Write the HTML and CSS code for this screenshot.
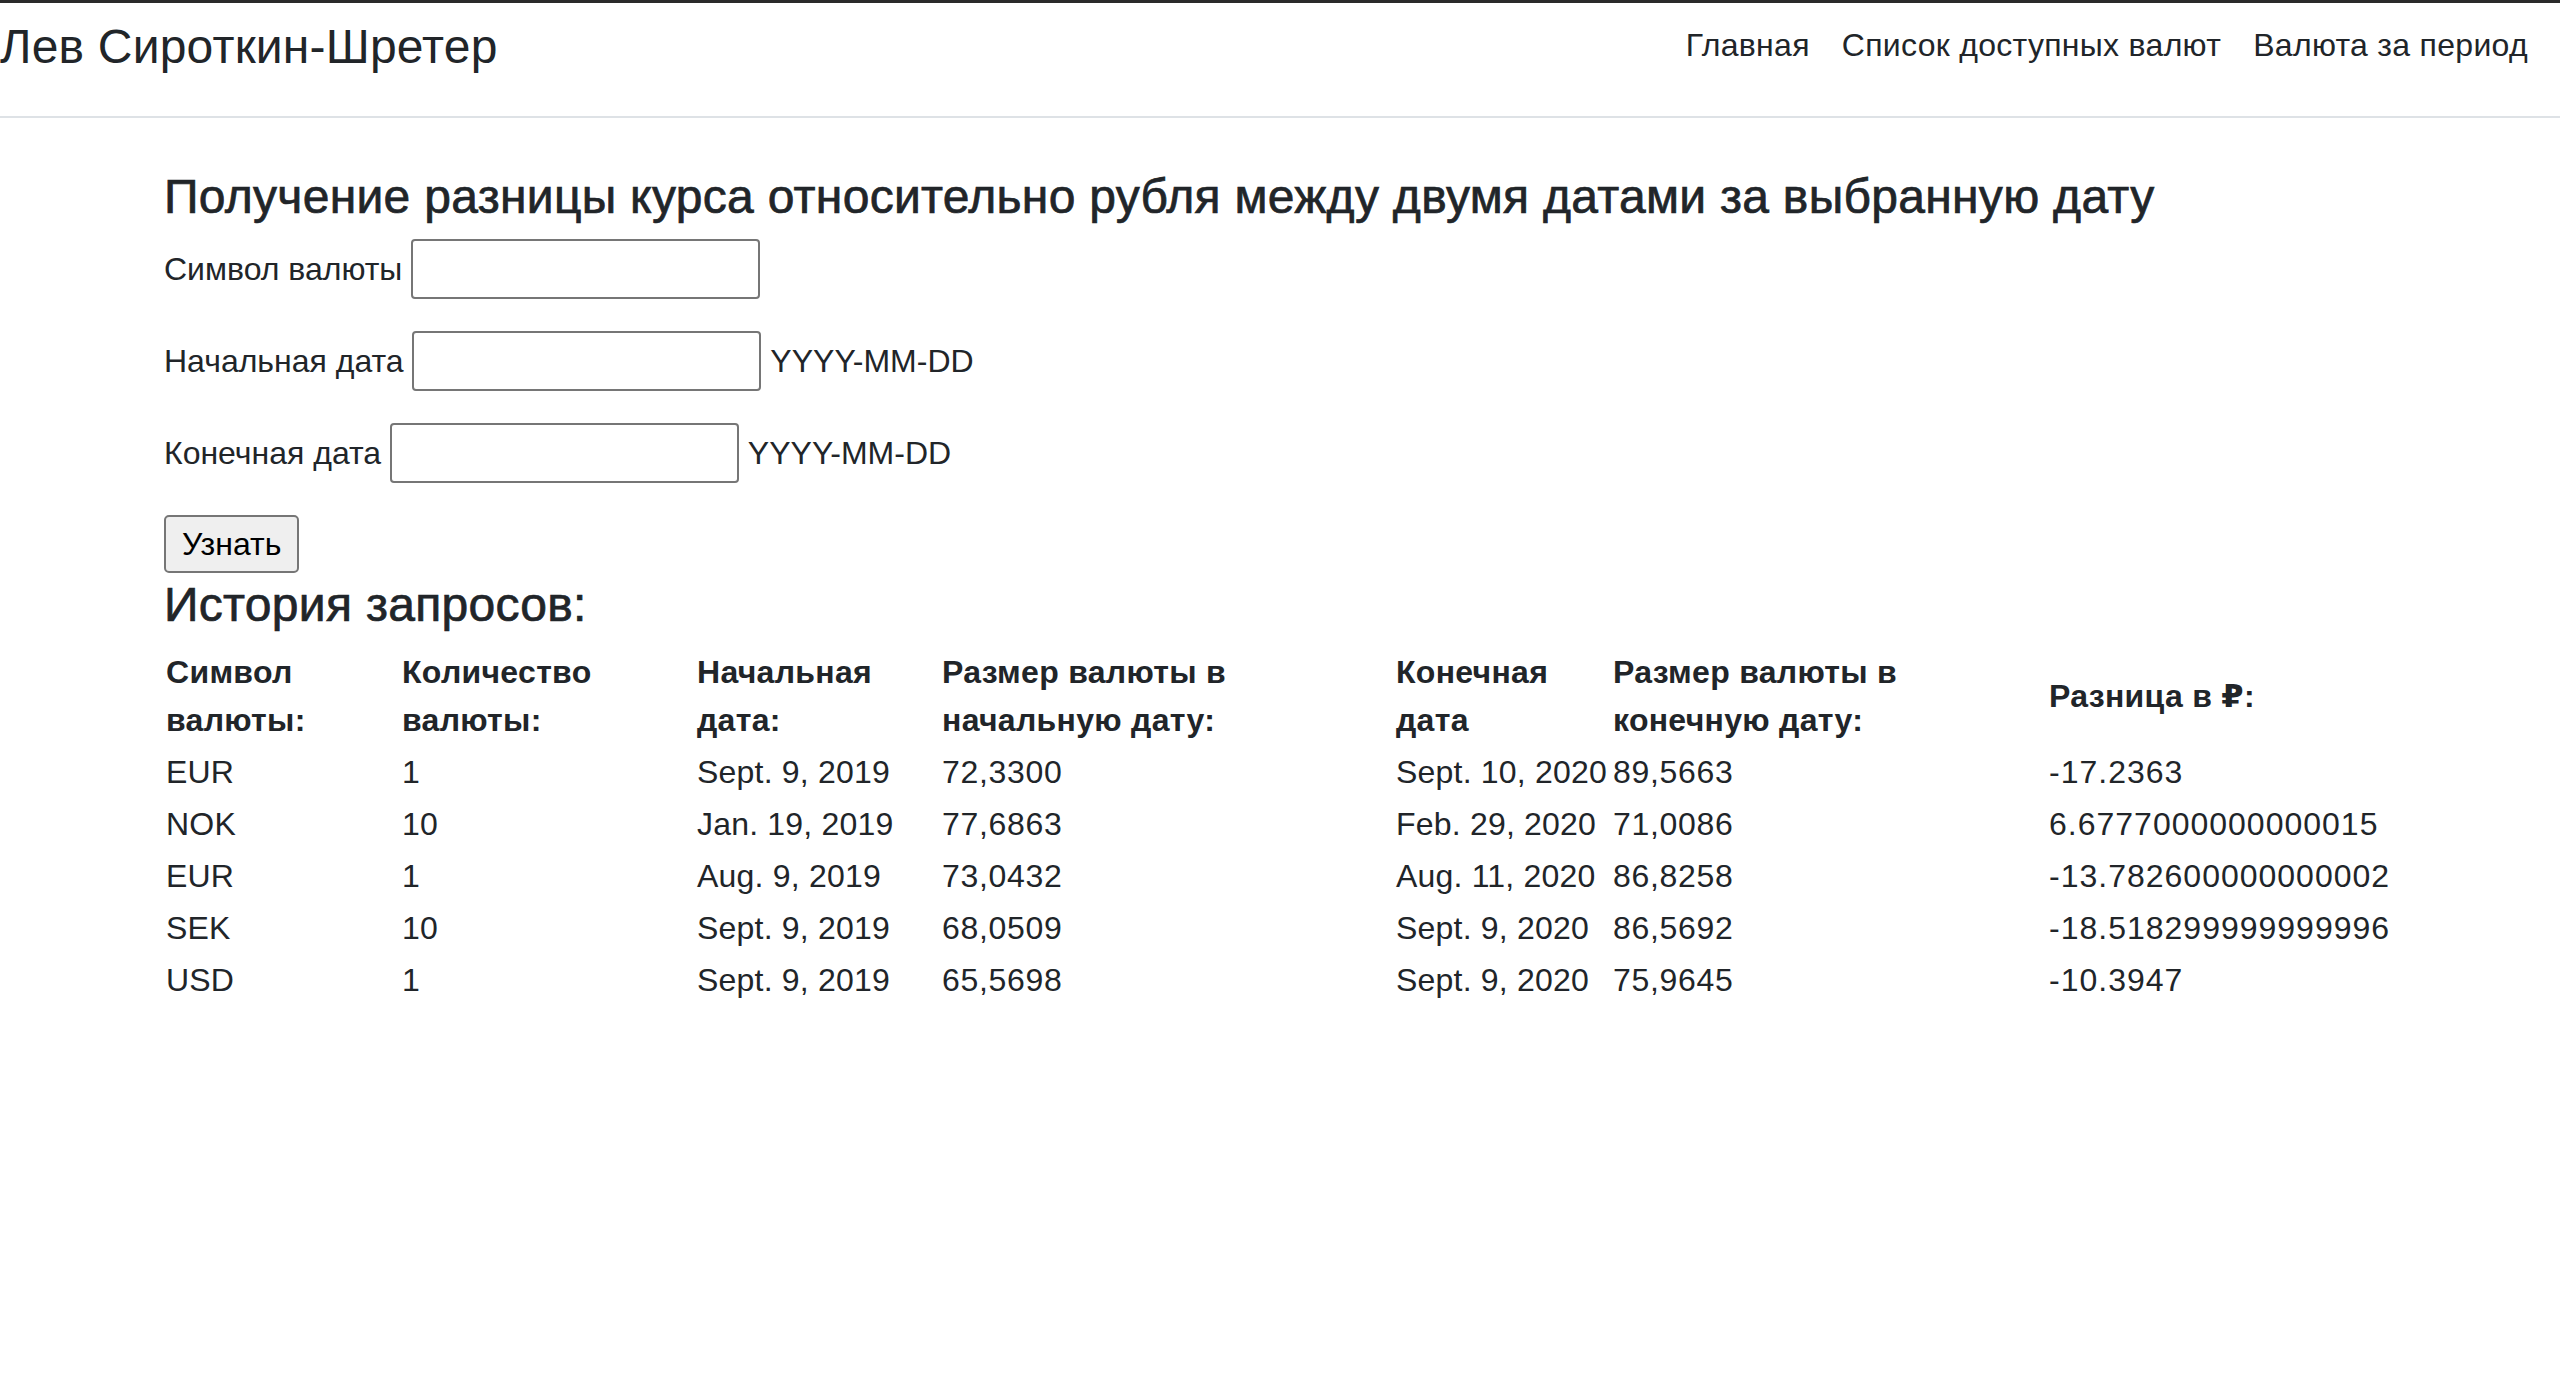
FILE: index.html
```html
<!DOCTYPE html>
<html lang="ru">
<head>
<meta charset="utf-8">
<title>Разница курса</title>
<link rel="stylesheet" href="styles.css">
</head>
<body>
<header class="site-header">
  <a class="brand" href="#">Лев Сироткин-Шретер</a>
  <nav class="nav">
    <a class="nav-link" href="#">Главная</a>
    <a class="nav-link" href="#">Список доступных валют</a>
    <a class="nav-link" href="#">Валюта за период</a>
  </nav>
</header>
<main class="container">
  <h4 class="title">Получение разницы курса относительно рубля между двумя датами за выбранную дату</h4>
  <form class="form">
    <p class="field"><label>Символ валюты</label> <input class="text-input" type="text"></p>
    <p class="field"><label>Начальная дата</label> <input class="text-input" type="text"> YYYY-MM-DD</p>
    <p class="field"><label>Конечная дата</label> <input class="text-input" type="text"> YYYY-MM-DD</p>
    <button class="btn" type="submit">Узнать</button>
  </form>
  <h4 class="title title-history">История запросов:</h4>
  <table class="history">
    <colgroup>
      <col class="c1"><col class="c2"><col class="c3"><col class="c4"><col class="c5"><col class="c6"><col class="c7">
    </colgroup>
    <thead>
      <tr>
        <th>Символ<br>валюты:</th>
        <th>Количество<br>валюты:</th>
        <th>Начальная<br>дата:</th>
        <th>Размер валюты в<br>начальную дату:</th>
        <th>Конечная<br>дата</th>
        <th>Размер валюты в<br>конечную дату:</th>
        <th>Разница в ₽:</th>
      </tr>
    </thead>
    <tbody>
      <tr><td>EUR</td><td>1</td><td>Sept. 9, 2019</td><td>72,3300</td><td>Sept. 10, 2020</td><td>89,5663</td><td>-17.2363</td></tr>
      <tr><td>NOK</td><td>10</td><td>Jan. 19, 2019</td><td>77,6863</td><td>Feb. 29, 2020</td><td>71,0086</td><td>6.6777000000000015</td></tr>
      <tr><td>EUR</td><td>1</td><td>Aug. 9, 2019</td><td>73,0432</td><td>Aug. 11, 2020</td><td>86,8258</td><td>-13.782600000000002</td></tr>
      <tr><td>SEK</td><td>10</td><td>Sept. 9, 2019</td><td>68,0509</td><td>Sept. 9, 2020</td><td>86,5692</td><td>-18.518299999999996</td></tr>
      <tr><td>USD</td><td>1</td><td>Sept. 9, 2019</td><td>65,5698</td><td>Sept. 9, 2020</td><td>75,9645</td><td>-10.3947</td></tr>
    </tbody>
  </table>
</main>
</body>
</html>
```
FILE: styles.css
```css
* { box-sizing: border-box; }
html, body { margin: 0; padding: 0; }
body {
  font-family: "Liberation Sans", Arial, "DejaVu Sans", sans-serif;
  font-size: 32px;
  line-height: 1.5;
  color: #212529;
  background: #fff;
  border-top: 3px solid #2a2a2a;
}
.site-header {
  display: flex;
  align-items: center;
  justify-content: space-between;
  padding: 2px 16px 31px 0;
  border-bottom: 2px solid #dee2e6;
  margin-bottom: 47px;
}
.brand {
  font-size: 48px;
  line-height: 72px;
  color: #212529;
  text-decoration: none;
  letter-spacing: 0.2px;
  padding-top: 4px;
}
.nav { display: flex; }
.nav-link {
  display: block;
  padding: 16px 16px;
  color: #212529;
  text-decoration: none;
  line-height: 48px;
  letter-spacing: 0.3px;
}
.container {
  width: 2232px;
  margin: 0 auto;
}
.title {
  font-size: 48px;
  font-weight: 500;
  line-height: 1.2;
  margin: 0 0 13px;
  padding-top: 3px;
  letter-spacing: 0.3px;
  -webkit-text-stroke: 0.7px #212529;
}
.form { margin: 0; }
.field { margin: 0 0 32px; }
.text-input {
  width: 349px;
  height: 60px;
  border: 2px solid #767676;
  border-radius: 4px;
  padding: 2px 4px;
  font: inherit;
  vertical-align: baseline;
}
.btn {
  font: inherit;
  line-height: 48px;
  padding: 3px 16px;
  background: #efefef;
  border: 2px solid #767676;
  border-radius: 5px;
  color: #000;
}
.history {
  width: 100%;
  border-collapse: collapse;
  table-layout: fixed;
}
.history th, .history td {
  padding: 2px;
  text-align: left;
  vertical-align: middle;
  white-space: nowrap;
}
.history th { font-weight: bold; letter-spacing: 0.3px; }
.history td { letter-spacing: 0.2px; }
.history td:nth-child(4),
.history td:nth-child(6) { letter-spacing: 0.7px; }
.history td:last-child { letter-spacing: 1px; }
.c1 { width: 236px; }
.c2 { width: 295px; }
.c3 { width: 245px; }
.c4 { width: 454px; }
.c5 { width: 217px; }
.c6 { width: 436px; }
.c7 { width: 349px; }
```
